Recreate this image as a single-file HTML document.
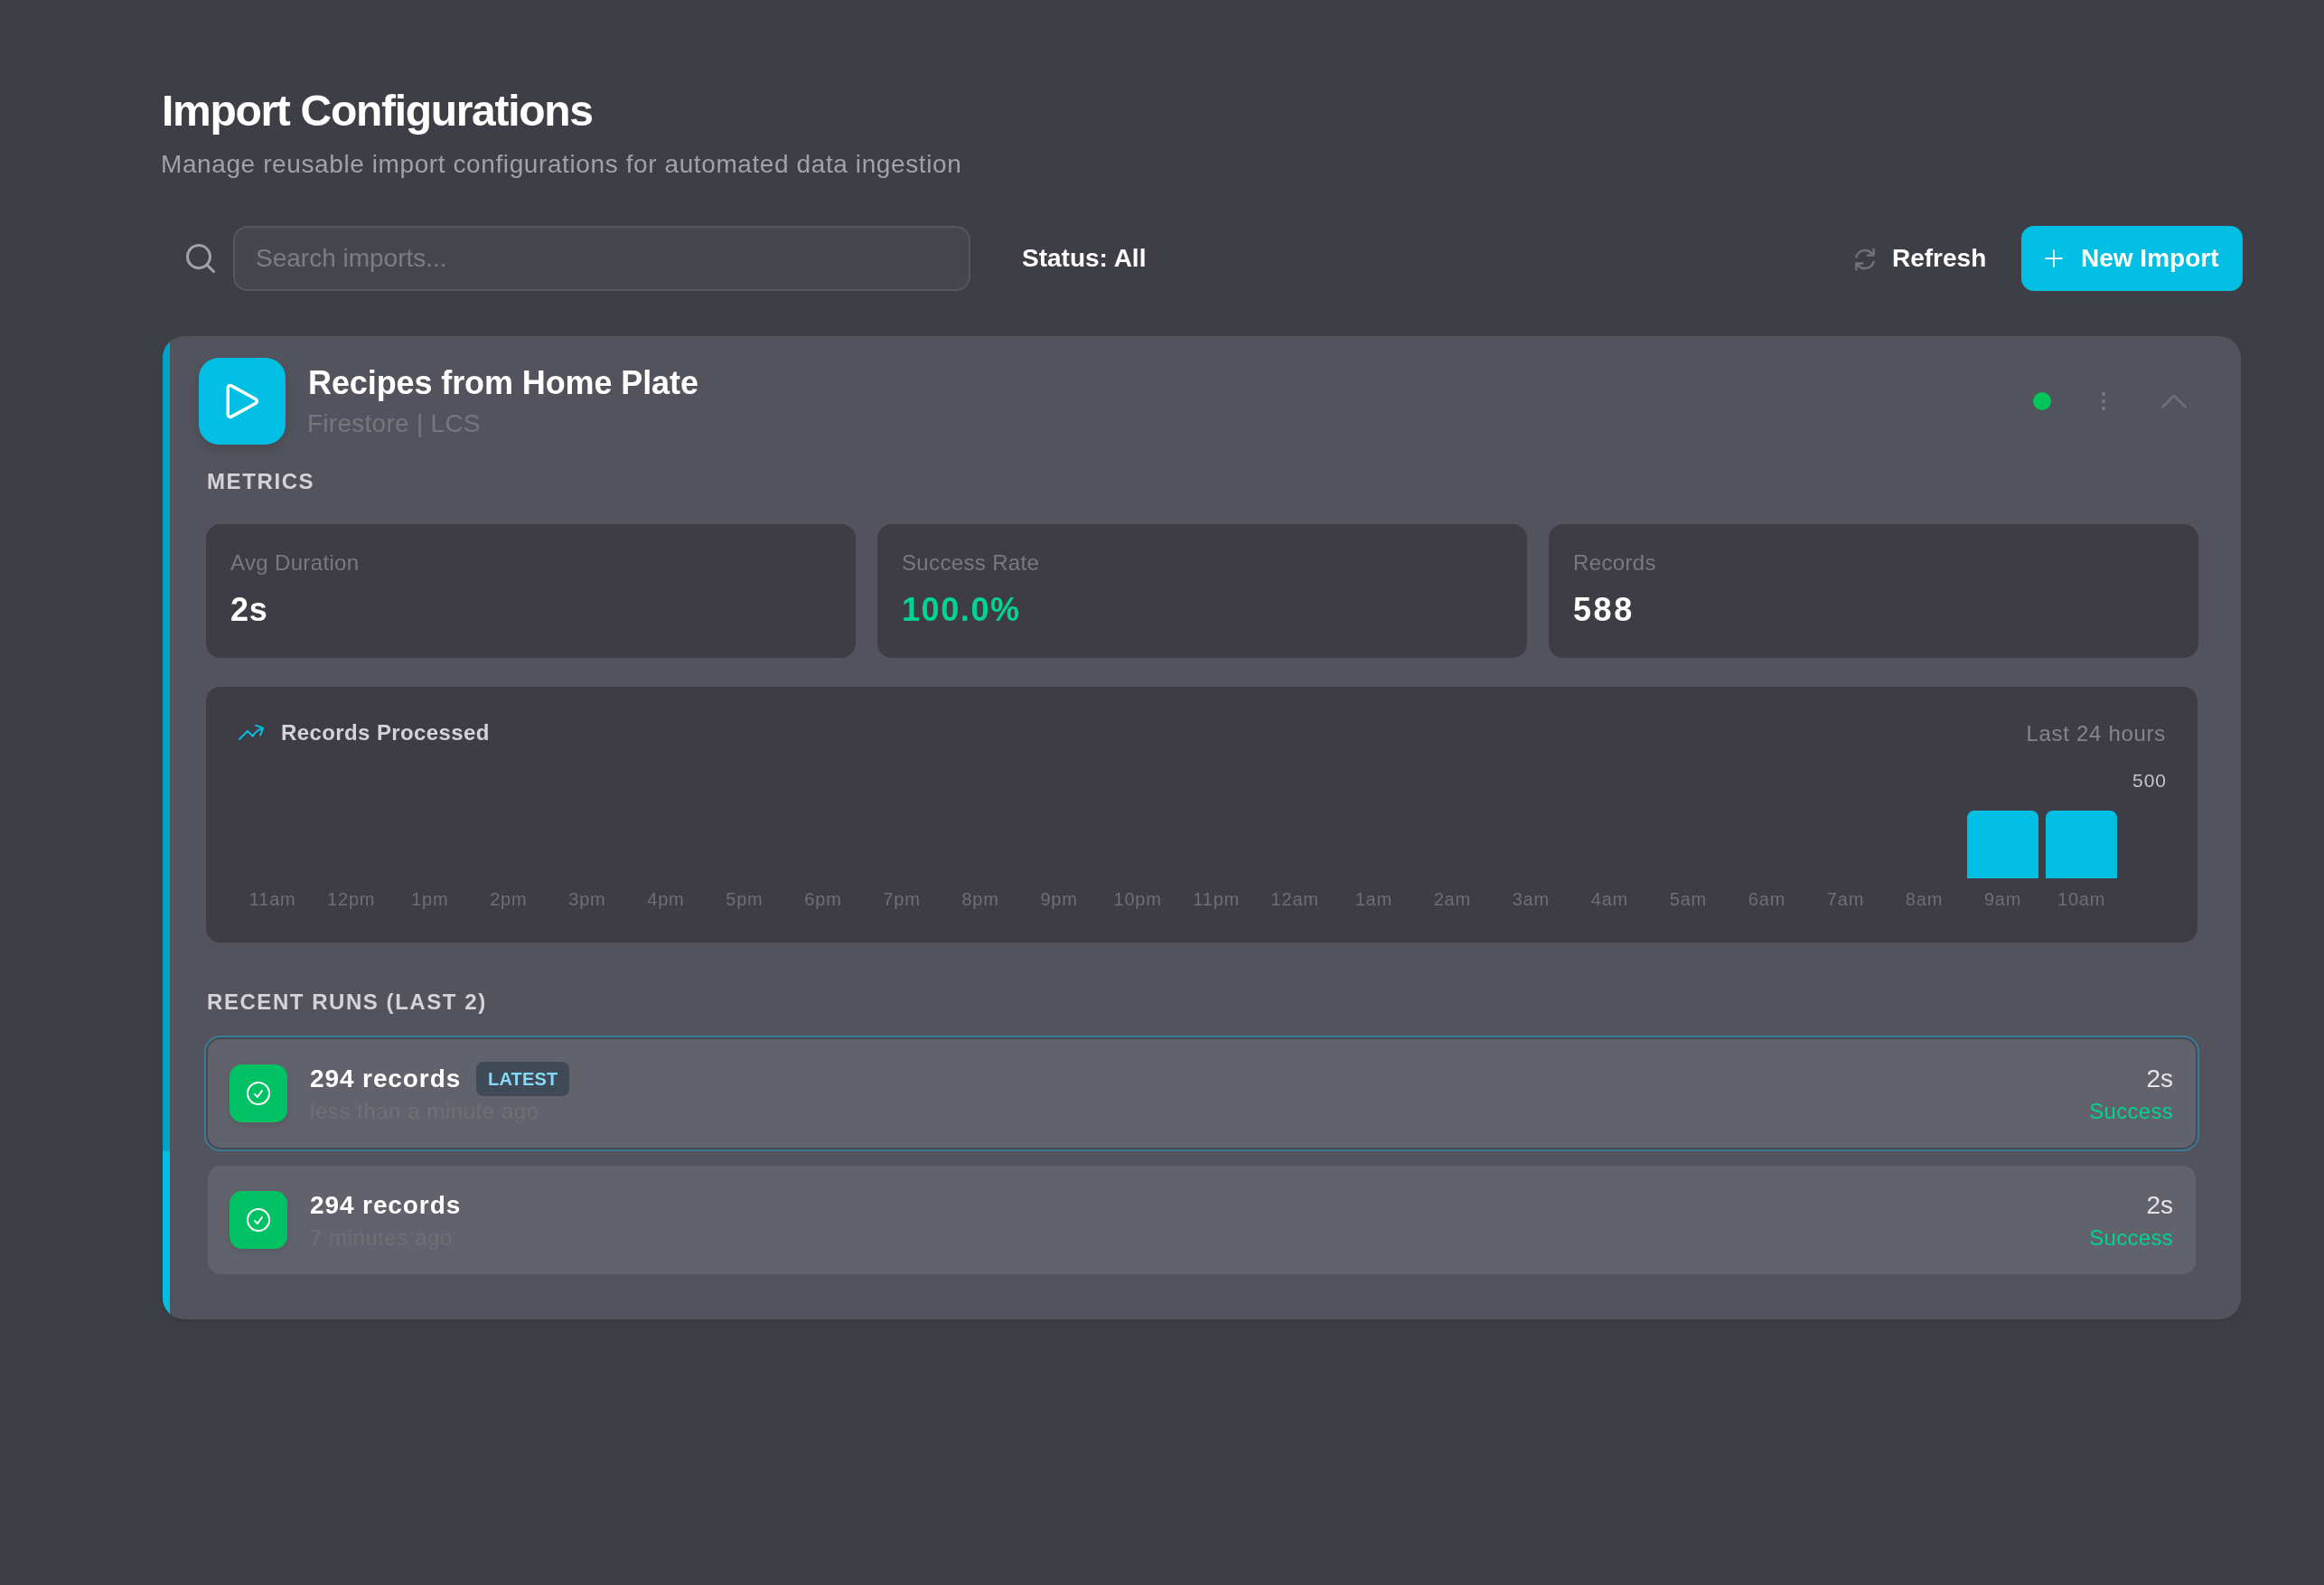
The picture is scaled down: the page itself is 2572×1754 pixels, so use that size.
<!DOCTYPE html>
<html><head><meta charset="utf-8">
<style>
html,body{margin:0;padding:0;}
body{width:100vw;height:100vh;min-height:877px;background:#3e3e47;position:relative;overflow:hidden;font-family:"Liberation Sans",sans-serif;color:#fff;}
.a{position:absolute;white-space:nowrap;}
@media (max-width:1400px){#root{zoom:0.5;}}
.t{line-height:1;}
svg{position:absolute;overflow:visible;}
.card{position:absolute;left:180px;top:372px;width:2300px;height:1088px;background:#53535d;border-radius:24px;overflow:hidden;box-shadow:0 6px 14px -2px rgba(0,0,0,0.07),0 2px 3px rgba(0,0,0,0.05);}
.card .bar{position:absolute;left:0;top:0;width:8px;height:100%;background:linear-gradient(#00a3c8 0,#00a3c8 902px,#00bfe2 902px,#00bfe2 100%);}
.mbox{position:absolute;top:580px;height:148px;width:719px;background:#3e3d45;border-radius:16px;}
.lbl{font-size:24px;color:#797981;letter-spacing:0.35px;}
.val{font-size:36px;font-weight:bold;}
.axis{font-size:20px;color:#6e6e76;text-align:center;width:80px;letter-spacing:0.8px;}
.row{position:absolute;left:228px;width:2204px;background:#62626c;border-radius:16px;box-sizing:border-box;}
.gicon{position:absolute;left:254px;width:64px;height:64px;border-radius:14px;background:#00c265;box-shadow:0 3px 6px rgba(0,0,0,0.10);}
</style></head>
<body>
<div id="root" style="position:absolute;left:0;top:0;width:2572px;height:1754px;will-change:transform;">
<!-- header -->
<div class="a t" style="left:179px;top:99px;font-size:48px;font-weight:bold;letter-spacing:-1.3px;">Import Configurations</div>
<div class="a t" style="left:178px;top:168px;font-size:28px;color:#a1a1aa;letter-spacing:0.6px;">Manage reusable import configurations for automated data ingestion</div>

<!-- toolbar -->
<svg style="left:201.75px;top:266px" width="40" height="40" viewBox="0 0 20 20" fill="#a1a1aa"><path fill-rule="evenodd" clip-rule="evenodd" d="M9 3.5a5.5 5.5 0 1 0 0 11 5.5 5.5 0 0 0 0-11ZM2 9a7 7 0 1 1 12.452 4.391l3.328 3.329a.75.75 0 1 1-1.06 1.06l-3.329-3.328A7 7 0 0 1 2 9Z"/></svg>
<div class="a" style="left:258px;top:250px;width:816px;height:72px;box-sizing:border-box;background:#46464e;border:2px solid #57575f;border-radius:16px;"></div>
<div class="a t" style="left:283px;top:272px;font-size:28px;color:#7c7c84;">Search imports...</div>
<div class="a t" style="left:1131px;top:272px;font-size:28px;font-weight:bold;">Status: All</div>

<svg style="left:2047.7px;top:270.7px" width="32" height="32" viewBox="0 0 20 20" fill="#71717a"><path fill-rule="evenodd" clip-rule="evenodd" d="M15.312 11.424a5.5 5.5 0 0 1-9.201 2.466l-.312-.311h2.433a.75.75 0 0 0 0-1.5H3.989a.75.75 0 0 0-.75.75v4.242a.75.75 0 0 0 1.5 0v-2.43l.31.31a7 7 0 0 0 11.712-3.138.75.75 0 0 0-1.449-.39Zm1.23-3.723a.75.75 0 0 0 .219-.53V2.929a.75.75 0 0 0-1.5 0V5.36l-.31-.31A7 7 0 0 0 3.239 8.188a.75.75 0 1 0 1.448.389A5.5 5.5 0 0 1 13.89 6.11l.311.31h-2.432a.75.75 0 0 0 0 1.5h4.243a.75.75 0 0 0 .53-.219Z"/></svg>
<div class="a t" style="left:2094px;top:272px;font-size:28px;font-weight:bold;">Refresh</div>

<div class="a" style="left:2237px;top:250px;width:245px;height:72px;background:#00bfe3;border-radius:14px;"></div>
<svg style="left:2259px;top:271.75px" width="28" height="28" viewBox="0 0 24 24" fill="none" stroke="#fff" stroke-width="1.6" stroke-linecap="round" stroke-linejoin="round"><path d="M12 4.5v15m7.5-7.5h-15"/></svg>
<div class="a t" style="left:2303px;top:272px;font-size:28px;font-weight:bold;">New Import</div>

<!-- card -->
<div class="card"><div class="bar"></div></div>

<div class="a" style="left:220px;top:396px;width:96px;height:96px;border-radius:22px;background:#00bfe3;box-shadow:0 6px 10px rgba(0,0,0,0.12);"></div>
<svg style="left:240px;top:416.1px" width="56" height="56" viewBox="0 0 24 24" fill="none" stroke="#fff" stroke-width="1.5" stroke-linecap="round" stroke-linejoin="round"><path d="M5.25 5.653c0-.856.917-1.398 1.667-.986l11.54 6.347a1.125 1.125 0 0 1 0 1.972l-11.54 6.347a1.125 1.125 0 0 1-1.667-.986V5.653Z"/></svg>
<div class="a t" style="left:341px;top:406px;font-size:36px;font-weight:bold;letter-spacing:-0.1px;">Recipes from Home Plate</div>
<div class="a t" style="left:340px;top:455px;font-size:28px;color:#76767e;letter-spacing:0.27px;">Firestore | LCS</div>

<div class="a" style="left:2250px;top:434px;width:20px;height:20px;border-radius:50%;background:#00c55c;"></div>
<svg style="left:2314px;top:430px" width="28" height="28" viewBox="0 0 24 24" fill="none" stroke="#7c7c84" stroke-width="1.6" stroke-linecap="round" stroke-linejoin="round"><circle cx="12" cy="12" r="1"/><circle cx="12" cy="5" r="1"/><circle cx="12" cy="19" r="1"/></svg>
<svg style="left:2385.7px;top:424px" width="40" height="40" viewBox="0 0 24 24" fill="none" stroke="#6f6f77" stroke-width="1.5" stroke-linecap="round" stroke-linejoin="round"><path d="m4.5 15.75 7.5-7.5 7.5 7.5"/></svg>

<div class="a t" style="left:229px;top:521px;font-size:24px;font-weight:bold;color:#d4d4d8;letter-spacing:1.6px;">METRICS</div>

<div class="mbox" style="left:228px;"></div>
<div class="mbox" style="left:971px;"></div>
<div class="mbox" style="left:1714px;"></div>
<div class="a t lbl" style="left:255px;top:611px;">Avg Duration</div>
<div class="a t val" style="left:255px;top:657px;letter-spacing:0.75px;">2s</div>
<div class="a t lbl" style="left:998px;top:611px;">Success Rate</div>
<div class="a t val" style="left:998px;top:657px;color:#00d48f;letter-spacing:1.6px;">100.0%</div>
<div class="a t lbl" style="left:1741px;top:611px;">Records</div>
<div class="a t val" style="left:1741px;top:657px;letter-spacing:2.6px;">588</div>

<!-- chart -->
<div class="a" style="left:228px;top:760px;width:2204px;height:283px;background:#3e3d45;border-radius:16px;"></div>
<svg style="left:261.7px;top:794.3px" width="32" height="32" viewBox="0 0 24 24" fill="none" stroke="#00bfe3" stroke-width="1.5" stroke-linecap="round" stroke-linejoin="round"><path d="M2.25 18 9 11.25l4.306 4.306a11.95 11.95 0 0 1 5.814-5.518l2.74-1.22m0 0-5.94-2.281m5.94 2.28-2.28 5.941"/></svg>
<div class="a t" style="left:311px;top:799px;font-size:24px;font-weight:bold;color:#d4d4d8;letter-spacing:0.4px;">Records Processed</div>
<div class="a t" style="right:175px;top:800px;font-size:24px;color:#85858d;letter-spacing:0.7px;">Last 24 hours</div>
<div class="a t" style="right:174px;top:853px;font-size:21px;color:#c4c4c8;letter-spacing:1px;">500</div>
<div class="a" style="left:2177px;top:897px;width:79px;height:75px;background:#00bfe3;border-radius:8px 8px 0 0;"></div>
<div class="a" style="left:2264px;top:897px;width:79px;height:75px;background:#00bfe3;border-radius:8px 8px 0 0;"></div>
<div class="a t axis" style="left:261.7px;top:985px;">11am</div>
<div class="a t axis" style="left:348.7px;top:985px;">12pm</div>
<div class="a t axis" style="left:435.8px;top:985px;">1pm</div>
<div class="a t axis" style="left:522.8px;top:985px;">2pm</div>
<div class="a t axis" style="left:609.9px;top:985px;">3pm</div>
<div class="a t axis" style="left:696.9px;top:985px;">4pm</div>
<div class="a t axis" style="left:783.9px;top:985px;">5pm</div>
<div class="a t axis" style="left:871.0px;top:985px;">6pm</div>
<div class="a t axis" style="left:958.0px;top:985px;">7pm</div>
<div class="a t axis" style="left:1045.1px;top:985px;">8pm</div>
<div class="a t axis" style="left:1132.1px;top:985px;">9pm</div>
<div class="a t axis" style="left:1219.1px;top:985px;">10pm</div>
<div class="a t axis" style="left:1306.2px;top:985px;">11pm</div>
<div class="a t axis" style="left:1393.2px;top:985px;">12am</div>
<div class="a t axis" style="left:1480.3px;top:985px;">1am</div>
<div class="a t axis" style="left:1567.3px;top:985px;">2am</div>
<div class="a t axis" style="left:1654.3px;top:985px;">3am</div>
<div class="a t axis" style="left:1741.4px;top:985px;">4am</div>
<div class="a t axis" style="left:1828.4px;top:985px;">5am</div>
<div class="a t axis" style="left:1915.5px;top:985px;">6am</div>
<div class="a t axis" style="left:2002.5px;top:985px;">7am</div>
<div class="a t axis" style="left:2089.5px;top:985px;">8am</div>
<div class="a t axis" style="left:2176.6px;top:985px;">9am</div>
<div class="a t axis" style="left:2263.6px;top:985px;">10am</div>


<div class="a t" style="left:229px;top:1097px;font-size:24px;font-weight:bold;color:#d4d4d8;letter-spacing:1.55px;">RECENT RUNS (LAST 2)</div>

<!-- run rows -->
<div class="row" style="top:1148px;height:124px;border:2px solid #47474f;box-shadow:0 0 0 2px #3b7b9a;"></div>
<div class="gicon" style="top:1178px;"></div>
<svg style="left:270px;top:1193.9px" width="32" height="32" viewBox="0 0 24 24" fill="none" stroke="#fff" stroke-width="1.5" stroke-linecap="round" stroke-linejoin="round"><path d="M9 12.75 11.25 15 15 9.75M21 12a9 9 0 1 1-18 0 9 9 0 0 1 18 0Z"/></svg>
<div class="a t" style="left:343px;top:1180px;font-size:28px;font-weight:bold;letter-spacing:0.9px;">294 records</div>
<div class="a" style="left:527px;top:1175px;width:103px;height:38px;border-radius:8px;background:#404a57;"></div>
<div class="a t" style="left:540px;top:1184px;font-size:20px;font-weight:bold;color:#84daf7;letter-spacing:0.2px;">LATEST</div>
<div class="a t" style="left:343px;top:1218px;font-size:24px;color:#6f6f77;letter-spacing:0.55px;">less than a minute ago</div>
<div class="a t" style="right:167px;top:1180px;font-size:28px;color:#e4e4e7;">2s</div>
<div class="a t" style="right:167px;top:1218px;font-size:24px;color:#00d492;letter-spacing:0.3px;">Success</div>

<div class="row" style="top:1288px;height:124px;border:2px solid #53535d;"></div>
<div class="gicon" style="top:1318px;"></div>
<svg style="left:270px;top:1333.9px" width="32" height="32" viewBox="0 0 24 24" fill="none" stroke="#fff" stroke-width="1.5" stroke-linecap="round" stroke-linejoin="round"><path d="M9 12.75 11.25 15 15 9.75M21 12a9 9 0 1 1-18 0 9 9 0 0 1 18 0Z"/></svg>
<div class="a t" style="left:343px;top:1320px;font-size:28px;font-weight:bold;letter-spacing:0.9px;">294 records</div>
<div class="a t" style="left:343px;top:1358px;font-size:24px;color:#6f6f77;letter-spacing:0.55px;">7 minutes ago</div>
<div class="a t" style="right:167px;top:1320px;font-size:28px;color:#e4e4e7;">2s</div>
<div class="a t" style="right:167px;top:1358px;font-size:24px;color:#00d492;letter-spacing:0.3px;">Success</div>

</div>
</body></html>
